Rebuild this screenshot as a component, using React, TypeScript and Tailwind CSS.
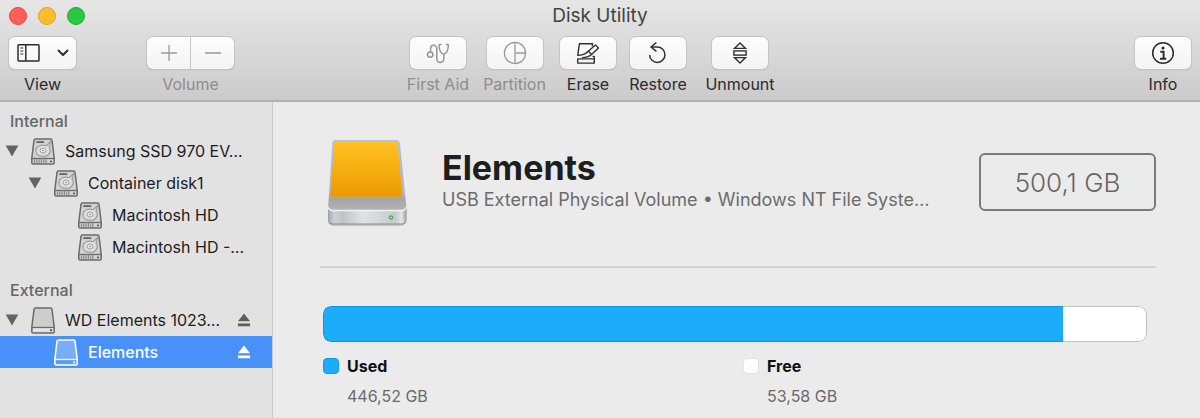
import type { ReactNode } from "react";

function SidebarIcon() {
  return (
    <svg width="24" height="20" viewBox="0 0 24 20" fill="none" stroke="#2b2b2b" strokeWidth="1.5" aria-hidden="true">
      <rect x="1" y="1.8" width="21" height="16.2" rx="0.8" />
      <path d="M8.8 2v16" />
      <path d="M3.3 5h3M3.3 8h3M3.3 11h3" strokeWidth="1.2" />
    </svg>
  );
}

function StethoscopeIcon() {
  return (
    <svg width="24" height="24" viewBox="0 0 24 24" fill="none" stroke="#969696" strokeWidth="1.5" strokeLinecap="round" aria-hidden="true">
      <circle cx="4.2" cy="13.6" r="2.7" />
      <path d="M4.6 10.7V7.4a3.1 3.1 0 0 1 6.200 0v10.500a3.500 3.500 0 0 0 7 0v-4.600" />
      <path d="M15 3.4h-1.2c-.7 0-.9.4-.8 1.100.3 3.500 1.800 8.400 4.700 8.400s4.400-4.900 4.700-8.400c.1-.7-.2-1.100-.8-1.100h-1.200" />
    </svg>
  );
}

function PartitionIcon() {
  return (
    <svg width="24" height="24" viewBox="0 0 24 24" fill="none" stroke="#9b9b9b" strokeWidth="1.3" aria-hidden="true">
      <circle cx="12" cy="12" r="10.6" />
      <path d="M12 1.4v21.2M12 12h10.6" />
    </svg>
  );
}

function EraseIcon() {
  return (
    <svg width="24" height="24" viewBox="0 0 24 24" fill="none" stroke="#303030" strokeWidth="1.4" strokeLinejoin="round" aria-hidden="true">
      <path d="M16.300 5.200l.2-2.400H3.400L1.700 14.400c4.500 0 7.800-1.300 10.500-4.100L19.500 4l3 2.900-7 6.700c-2.600 2.300-5.600 3.100-9.300 3.100" />
      <path d="M12.400 10.200l3.200 3.300" />
      <path d="M16.500 15.400h1.800v6.700H1.700v-4.200h16.600" />
    </svg>
  );
}

function RestoreIcon() {
  return (
    <svg width="24" height="24" viewBox="0 0 24 24" fill="none" stroke="#303030" strokeWidth="1.5" aria-hidden="true">
      <path d="M3.600 13.900a7.700 7.700 0 1 0 7.700-7.900H5.100" />
      <path d="M10.400 1.600L5 6l5.400 4.400" />
    </svg>
  );
}

function UnmountIcon() {
  return (
    <svg width="24" height="24" viewBox="0 0 24 24" fill="none" stroke="#303030" strokeWidth="1.4" aria-hidden="true">
      <path d="M12 1.9l5.500 5.500h-11zM12 22.100l5.500-5.500h-11z" />
      <rect x="5.900" y="9.900" width="12.200" height="4.200" />
    </svg>
  );
}

function InfoIcon() {
  return (
    <svg width="24" height="24" viewBox="0 0 24 24" fill="none" stroke="#2b2b2b" strokeWidth="1.5" aria-hidden="true">
      <circle cx="12" cy="12" r="10.3" />
      <circle cx="12" cy="7" r="1.6" fill="#2b2b2b" stroke="none" />
      <path d="M9.300 10.700h3.300v6.900M9 17.800h6.200" strokeWidth="1.900" />
    </svg>
  );
}

function ExternalDiskShape({ line, fill }: { line: string; fill: string }) {
  return (
    <>
      <path d="M4.500 1.100h15q1.300 0 1.500 1.300l2.200 17.800v4.600q0 1.300-1.300 1.300H2.100q-1.300 0-1.300-1.300v-4.600L3 2.400q.2-1.300 1.500-1.300z" fill={fill} stroke={line} strokeWidth="1.5" />
      <path d="M1 20.500h22" stroke={line} strokeWidth="1.3" />
    </>
  );
}

function InternalDisk() {
  return (
    <svg width="24" height="27" viewBox="0 0 24 27" fill="none" className="shrink-0" aria-hidden="true">
      <ExternalDiskShape line="#6b6b6b" fill="#d2d2d2" />
      <path d="M5.400 4.100h7.800" stroke="#555" strokeWidth="1.600" />
      <path d="M19.400 3.800l-4 3.900C10 5.900 4.800 8.600 4.900 12.700c.1 3.500 3.300 5.700 7.200 5.700 4.300 0 7.400-2.600 7.200-6.100-.1-1.300-.5-2-1.100-2.700z" fill="#dedede" stroke="#a0a0a0" strokeWidth="1.300" />
      <ellipse cx="12" cy="12.600" rx="2.900" ry="2.400" fill="#ececec" stroke="#a0a0a0" strokeWidth="1" />
      <circle cx="12" cy="12.600" r=".7" fill="#555" />
      <path d="M3.500 21.200v4.200M5.800 21.200v4.200M8.100 21.200v4.200M10.400 21.200v4.200M12.700 21.200v4.200M15 21.200v4.200" stroke="#858585" strokeWidth="1.100" />
      <circle cx="20" cy="23.300" r=".9" fill="#333" />
    </svg>
  );
}

function ExternalDisk({ selected }: { selected?: boolean }) {
  return (
    <svg width="24" height="27" viewBox="0 0 24 27" fill="none" className="shrink-0" aria-hidden="true">
      <ExternalDiskShape line={selected ? "#ffffff" : "#6b6b6b"} fill={selected ? "#77adf9" : "#cdcdcd"} />
      <path d="M2 21.400h20v3.400H2z" fill={selected ? "#5b9bf8" : "#e4e4e4"} />
      <circle cx="20" cy="23.300" r="1" fill={selected ? "#ffffff" : "#333"} />
    </svg>
  );
}

function EjectIcon() {
  return (
    <svg width="12" height="14" viewBox="0 0 12 14" fill="currentColor" aria-hidden="true">
      <path d="M6 0.500L12 8.300H0zM0 10.400h12v2.900H0z" />
    </svg>
  );
}

function DriveArtwork() {
  return (
    <svg width="84" height="92" viewBox="0 0 84 92" className="shrink-0" aria-hidden="true">
      <defs>
        <linearGradient id="drive-label" x1="0" y1="0" x2="0" y2="1">
          <stop offset="0" stopColor="#ffc220" />
          <stop offset="1" stopColor="#ec9a02" />
        </linearGradient>
        <linearGradient id="drive-top" x1="0" y1="0" x2="0" y2="1">
          <stop offset="0" stopColor="#b4c1d8" />
          <stop offset=".65" stopColor="#b3b6bb" />
          <stop offset=".7" stopColor="#a4a4a4" />
          <stop offset=".85" stopColor="#b5b5b5" />
        </linearGradient>
        <linearGradient id="drive-front" x1="0" y1="0" x2="1" y2="0">
          <stop offset="0" stopColor="#9fa4a8" />
          <stop offset=".08" stopColor="#cdd2d5" />
          <stop offset=".18" stopColor="#bcc3c8" />
          <stop offset=".45" stopColor="#dfe3e5" />
          <stop offset=".85" stopColor="#c5cace" />
          <stop offset=".94" stopColor="#e2e4e5" />
          <stop offset="1" stopColor="#999da0" />
        </linearGradient>
      </defs>
      <path d="M3 82v4q1 3 4 3h68q3 0 4-3v-4z" fill="#c4c4c4" />
      <path d="M9 3h61q3.500 0 4 3.500L80.500 71v12q0 4-4 4H6q-4 0-4-4V71L6.300 6.500Q6.500 3 9 3z" fill="url(#drive-top)" />
      <path d="M2 70q1 3.500 5 3.500h68.500q4 0 5-3.500v13q0 4-4 4H6q-4 0-4-4z" fill="url(#drive-front)" />
      <path d="M2 70q1 3.500 5 3.500h68.500q4 0 5-3.500" fill="none" stroke="#f0f2f3" strokeWidth="1.300" />
      <path d="M3 85.500q1.200 1.500 3 1.500h70.500q1.800 0 3-1.500" fill="none" stroke="#888c8f" strokeWidth="1.100" />
      <path d="M10.500 4.800h58.800q2 0 2.300 2.200l4.700 50.500q.2 2.200-2.200 2.200H6.600q-2.300 0-2.200-2.200L8.300 7q.2-2.200 2.200-2.200z" fill="url(#drive-label)" />
      <circle cx="65" cy="80.500" r="2.300" fill="#55ab55" />
      <circle cx="65" cy="80.500" r=".8" fill="#d4ffc8" />
    </svg>
  );
}

const buttonFace =
  "flex h-8 items-center justify-center bg-linear-to-b from-[#fdfdfd] to-[#f4f4f4]";
const buttonFrame =
  "rounded-md shadow-[0_0_0_1px_#c4c4c4,0_1px_1px_#9c9c9c]";

function Tool({ label, width, disabled, children }: { label: string; width: string; disabled?: boolean; children: ReactNode }) {
  return (
    <div className={`flex shrink-0 flex-col items-center gap-[3px] ${width}`}>
      <button type="button" aria-label={label} disabled={disabled} className={`w-14 ${buttonFace} ${buttonFrame}`}>
        {children}
      </button>
      <span className={`text-base leading-6 whitespace-nowrap ${disabled ? "text-[#8d8d8d]" : "text-[#2b2b2b]"}`}>{label}</span>
    </div>
  );
}

function Header() {
  return (
    <header className="border-b-2 border-[#b1b1b1] bg-linear-to-b from-[#e6e6e6] to-[#cbcbcb] pb-1">
      <div className="grid h-8 grid-cols-[1fr_auto_1fr] items-center px-[9px]">
        <div className="flex gap-[11px]">
          <button type="button" aria-label="Close" className="size-[18px] rounded-full border border-[#e2463f] bg-[#ff5f57]" />
          <button type="button" aria-label="Minimize" className="size-[18px] rounded-full border border-[#e0a126] bg-[#ffbd2e]" />
          <button type="button" aria-label="Zoom" className="size-[18px] rounded-full border border-[#1dab2c] bg-[#28c940]" />
        </div>
        <h1 className="text-[19px] leading-6 text-[#434343]">Disk Utility</h1>
      </div>
      <div className="flex px-2 pt-[5px]">
        <div className="flex w-[398px] shrink-0 gap-[70px]">
          <div className="flex w-[69px] flex-col items-center gap-[3px]">
            <button type="button" aria-label="View" className={`w-[67px] gap-4 ${buttonFace} ${buttonFrame}`}>
              <SidebarIcon />
              <svg width="12" height="8" viewBox="0 0 12 8" fill="none" stroke="#303030" strokeWidth="2" strokeLinecap="round" strokeLinejoin="round" aria-hidden="true">
                <path d="M1.500 1.500L6 6l4.500-4.500" />
              </svg>
            </button>
            <span className="text-base leading-6 text-[#2b2b2b]">View</span>
          </div>
          <div className="flex w-[87px] flex-col items-center gap-[3px]">
            <div className={`flex w-full overflow-hidden ${buttonFrame}`}>
              <button type="button" aria-label="Add volume" disabled className={`flex-1 border-r border-[#c8c8c8] ${buttonFace}`}>
                <svg width="18" height="18" viewBox="0 0 18 18" stroke="#999" strokeWidth="1.300" aria-hidden="true">
                  <path d="M1 9h16M9 1v16" />
                </svg>
              </button>
              <button type="button" aria-label="Remove volume" disabled className={`flex-1 ${buttonFace}`}>
                <svg width="18" height="18" viewBox="0 0 18 18" stroke="#999" strokeWidth="1.300" aria-hidden="true">
                  <path d="M1 9h16" />
                </svg>
              </button>
            </div>
            <span className="text-base leading-6 text-[#8d8d8d]">Volume</span>
          </div>
        </div>
        <div className="flex shrink-0 gap-3">
          <Tool label="First Aid" width="w-16" disabled><StethoscopeIcon /></Tool>
          <Tool label="Partition" width="w-[65px]" disabled><PartitionIcon /></Tool>
          <Tool label="Erase" width="w-[58px]"><EraseIcon /></Tool>
          <Tool label="Restore" width="w-[58px]"><RestoreIcon /></Tool>
          <Tool label="Unmount" width="w-[70px] ml-[6px]"><UnmountIcon /></Tool>
        </div>
        <div className="ml-auto">
          <Tool label="Info" width="w-[58px]"><InfoIcon /></Tool>
        </div>
      </div>
    </header>
  );
}

type RowProps = { name: string; indent: string; external?: boolean; expandable?: boolean; ejectable?: boolean; selected?: boolean };

function Row({ name, indent, external, expandable, ejectable, selected }: RowProps) {
  return (
    <li className={`flex h-8 items-center pr-[22px] ${indent} ${selected ? "bg-[#4791f8] text-white" : "text-[#1d1d1d]"}`}>
      {expandable ? (
        <button type="button" aria-label={`Collapse ${name}`} className="mr-3 flex shrink-0">
          <svg width="14" height="12" viewBox="0 0 14 12" fill="#636363" aria-hidden="true">
            <path d="M.7.500h12.600L7 11.500z" />
          </svg>
        </button>
      ) : (
        <span className="mr-3 w-[14px] shrink-0" />
      )}
      {external ? <ExternalDisk selected={selected} /> : <InternalDisk />}
      <span className={`ml-[10px] text-base whitespace-nowrap ${selected ? "font-medium" : ""}`}>{name}</span>
      {ejectable && (
        <button type="button" aria-label={`Eject ${name}`} className={`ml-auto shrink-0 ${selected ? "text-white" : "text-[#5d5d5d]"}`}>
          <EjectIcon />
        </button>
      )}
    </li>
  );
}

function Sidebar() {
  return (
    <nav aria-label="Disks" className="w-[273px] shrink-0 border-r border-[#c9c9c9] bg-[#e2e2e2] pt-[6px]">
      <h2 className="pl-[10px] text-base leading-[27px] font-medium text-[#666]">Internal</h2>
      <ul>
        <Row name="Samsung SSD 970 EV…" indent="pl-[5px]" expandable />
        <Row name="Container disk1" indent="pl-[28px]" expandable />
        <Row name="Macintosh HD" indent="pl-[52px]" />
        <Row name="Macintosh HD -…" indent="pl-[52px]" />
      </ul>
      <h2 className="mt-[14px] pl-[10px] text-base leading-[27px] font-medium text-[#666]">External</h2>
      <ul>
        <Row name="WD Elements 1023…" indent="pl-[5px]" external expandable ejectable />
        <Row name="Elements" indent="pl-[28px]" external ejectable selected />
      </ul>
    </nav>
  );
}

function Legend({ label, value, swatch }: { label: string; value: string; swatch: string }) {
  return (
    <div className="grid flex-1 grid-cols-[auto_1fr] items-center gap-x-2 gap-y-1 whitespace-nowrap">
      <span className={`size-4 rounded-sm ${swatch}`} />
      <dt className="text-base leading-[26px] font-bold text-[#111]">{label}</dt>
      <dd className="col-start-2 text-base leading-[26px] text-[#6a6a6a]">{value}</dd>
    </div>
  );
}

function Details() {
  const usedPercent = 89.8;
  return (
    <main className="min-w-0 flex-1 bg-[#ebebeb] pr-11 pl-[47px]">
      <div className="flex items-start border-b-2 border-[#d4d4d4] pt-[35px] pb-[37px] pl-[6px]">
        <DriveArtwork />
        <div className="ml-8 min-w-0 flex-1 pt-3">
          <h2 className="text-[34px] leading-[38px] font-bold text-[#1e1e1e]">Elements</h2>
          <p className="text-lg leading-[26px] whitespace-nowrap text-[#6b6b6b]">
            USB External Physical Volume • Windows NT File Syste…
          </p>
        </div>
        <div className="mt-4 flex h-[58px] w-[177px] shrink-0 items-center justify-center rounded-md border-2 border-[#7b7b7b] text-[26px] font-light text-[#666]">
          500,1 GB
        </div>
      </div>
      <div className="pt-[38px] pr-[9px] pl-[3px]">
        <div role="img" aria-label="Used 446,52 GB, free 53,58 GB" className="flex h-9 overflow-hidden rounded-lg bg-white">
          <div className="rounded-l-lg border border-r-0 border-[#0b94e8] bg-[#1dacfa]" style={{ width: `${usedPercent}%` }} />
          <div className="flex-1 rounded-r-lg border border-l-0 border-[#c2c2c2]" />
        </div>
        <dl className="mt-[11px] flex gap-4">
          <Legend label="Used" value="446,52 GB" swatch="border border-[#0b9cf0] bg-[#1dacfa]" />
          <Legend label="Free" value="53,58 GB" swatch="border border-[#e2e2e2] bg-white" />
        </dl>
      </div>
    </main>
  );
}

export default function App() {
  return (
    <div className="flex min-h-screen flex-col font-['Inter',sans-serif]">
      <Header />
      <div className="flex flex-1">
        <Sidebar />
        <Details />
      </div>
    </div>
  );
}
